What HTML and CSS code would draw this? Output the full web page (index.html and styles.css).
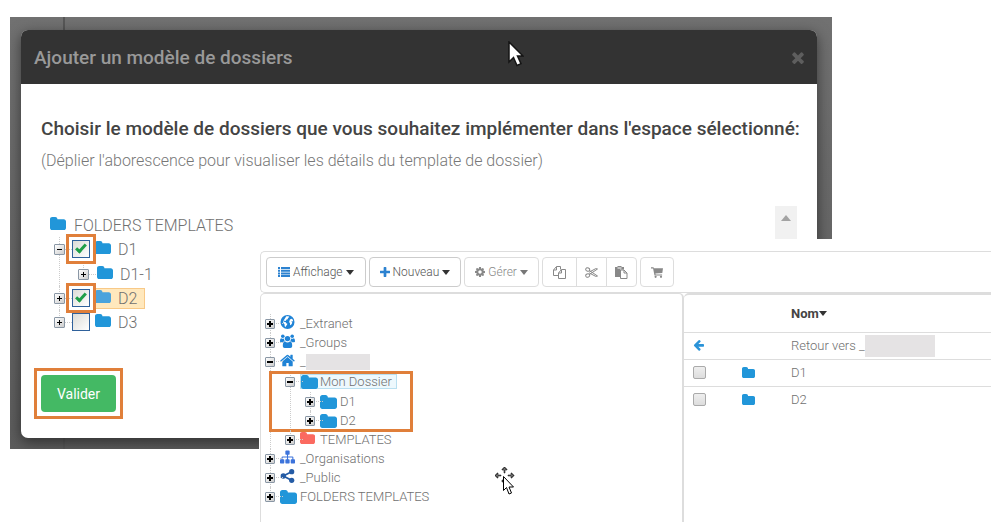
FILE: index.html
```html
<!DOCTYPE html>
<html lang="fr">
<head>
<meta charset="utf-8">
<title>Ajouter un modèle de dossiers</title>
<link rel="stylesheet" href="styles.css">
</head>
<body>
<svg class="sprite" aria-hidden="true">
  <symbol id="folder" viewBox="64 128 1664 1408" preserveAspectRatio="none"><path d="M1728 608v704q0 92-66 158t-158 66h-1216q-92 0-158-66t-66-158v-960q0-92 66-158t158-66h320q92 0 158 66t66 158v32h672q92 0 158 66t66 158z"/></symbol>
  <symbol id="times" viewBox="302 238 1188 1316"><path d="M1490 1322q0 40-28 68l-136 136q-28 28-68 28t-68-28l-294-294-294 294q-28 28-68 28t-68-28l-136-136q-28-28-28-68t28-68l294-294-294-294q-28-28-28-68t28-68l136-136q28-28 68-28t68 28l294 294 294-294q28-28 68-28t68 28l136 136q28 28 28 68t-28 68l-294 294 294 294q28 28 28 68z"/></symbol>
  <symbol id="home" viewBox="64 128 1664 1408"><path d="M1472 992v480q0 26-19 45t-45 19h-384v-384h-256v384h-384q-26 0-45-19t-19-45v-480q0-1 .5-3t.5-3l575-474 575 474q1 2 1 6zm223-69l-62 74q-8 9-21 11h-3q-13 0-21-7l-692-577-692 577q-12 8-24 7-13-2-21-11l-62-74q-8-10-7-23.500t11-21.500l719-599q32-26 76-26t76 26l244 204v-195q0-14 9-23t23-9h192q14 0 23 9t9 23v408l219 182q10 8 11 21.500t-7 23.500z"/></symbol>
  <symbol id="cog" viewBox="128 128 1536 1536"><path d="M1152 896q0-106-75-181t-181-75-181 75-75 181 75 181 181 75 181-75 75-181zm512-109v222q0 12-8 23t-20 13l-185 28q-19 54-39 91 35 50 107 138 10 12 10 25t-9 23q-27 37-99 108t-94 71q-12 0-26-9l-138-108q-44 23-91 38-16 136-29 186-7 28-36 28h-222q-14 0-24.500-8.500t-11.500-21.500l-28-184q-49-16-90-37l-141 107q-10 9-25 9-14 0-25-11-126-114-165-168-7-10-7-23 0-12 8-23 15-21 51-66.500t54-70.500q-27-50-41-99l-183-27q-13-2-21-12.500t-8-23.500v-222q0-12 8-23t19-13l186-28q14-46 39-92-40-57-107-138-10-12-10-24 0-10 9-23 26-36 98.500-107.500t94.500-71.500q13 0 26 10l138 107q44-23 91-38 16-136 29-186 7-28 36-28h222q14 0 24.500 8.500t11.500 21.500l28 184q49 16 90 37l142-107q9-9 24-9 13 0 25 10 129 119 165 170 7 8 7 22 0 12-8 23-15 21-51 66.500t-54 70.500q26 50 41 98l183 28q13 2 21 12.500t8 23.500z"/></symbol>
  <symbol id="plus" viewBox="192 128 1408 1408"><path d="M1600 736v192q0 40-28 68t-68 28h-416v416q0 40-28 68t-68 28h-192q-40 0-68-28t-28-68v-416h-416q-40 0-68-28t-28-68v-192q0-40 28-68t68-28h416v-416q0-40 28-68t68-28h192q40 0 68 28t28 68v416h416q40 0 68 28t28 68z"/></symbol>
  <symbol id="back" viewBox="64 256 1600 1450"><path d="M1664 896v128q0 53-32.500 90.500t-84.500 37.500h-704l293 294q38 36 38 90t-38 90l-75 76q-37 37-90 37-52 0-91-37l-651-652q-37-37-37-90 0-52 37-91l651-650q38-38 91-38 52 0 90 38l75 74q38 38 38 91t-38 91l-293 293h704q52 0 84.500 37.500t32.500 90.500z"/></symbol>
  <symbol id="sitemap" viewBox="0 128 1792 1536"><path d="M1792 1248v320q0 40-28 68t-68 28h-320q-40 0-68-28t-28-68v-320q0-40 28-68t68-28h96v-192h-512v192h96q40 0 68 28t28 68v320q0 40-28 68t-68 28h-320q-40 0-68-28t-28-68v-320q0-40 28-68t68-28h96v-192h-512v192h96q40 0 68 28t28 68v320q0 40-28 68t-68 28h-320q-40 0-68-28t-28-68v-320q0-40 28-68t68-28h96v-192q0-52 38-90t90-38h512v-192h-96q-40 0-68-28t-28-68v-320q0-40 28-68t68-28h320q40 0 68 28t28 68v320q0 40-28 68t-68 28h-96v192h512q52 0 90 38t38 90v192h96q40 0 68 28t28 68z"/></symbol>
  <symbol id="share" viewBox="0 0 14 14"><path d="M2.800 7 11 2.800M2.800 7 11 11.200" fill="none" stroke="currentColor" stroke-width="1.800"/><circle cx="2.800" cy="7" r="2.700"/><circle cx="11.200" cy="2.700" r="2.600"/><circle cx="11.200" cy="11.300" r="2.600"/></symbol>
  <symbol id="list" viewBox="0 0 12 10"><path d="M0 0h2v2H0zM3 0h9v2H3zM0 2.700h2v2H0zM3 2.700h9v2H3zM0 5.400h2v2H0zM3 5.400h9v2H3zM0 8h2v2H0zM3 8h9v2H3z"/></symbol>
  <symbol id="users" viewBox="0 0 15 14"><circle cx="2.800" cy="2.200" r="1.800"/><circle cx="12.200" cy="2.200" r="1.800"/><circle cx="7.500" cy="4.600" r="2.700"/><path d="M0 7.600C0 5 .6 4.300 1.300 4.300c.8.700 2 .6 2.600.3.100 1.200.4 1.900.9 2.600-.8 0-1.500.4-2 1.100H1c-.7 0-1-.3-1-.7zM15 7.600c0-2.600-.6-3.300-1.300-3.300-.8.700-2 .6-2.600.3-.1 1.200-.4 1.900-.9 2.600.8 0 1.500.4 2 1.100H14c.7 0 1-.3 1-.7zM2.800 11.800c0-2.900.8-4.200 2.400-4.200 1.400 1.200 3.200 1.200 4.600 0 1.600 0 2.400 1.300 2.400 4.200 0 1.400-.7 2.200-1.900 2.200H4.700c-1.200 0-1.900-.8-1.900-2.200z"/></symbol>
  <symbol id="globe" viewBox="0 0 14 14"><circle cx="7" cy="7" r="7"/><path fill="#fff" d="M5.800 1.300 8 1.200l.8.800-1.300.9-.3 1.300-1.200.3-.6 1.300-.9.300-1-.6-.3.900 1 .6 1.200.2.300 1 1.200.6-.6 1.500-.9.700-.2 1.200-1-1-.2-1.900-1.200-1.300-.2-1.300.7-1.500zM9.400 4.600l1.500-.8 1.300.6.500 1.900-.5.300-.8-.6-.4.400.8 1.300-.8 1.500-.9 1-.5-.3-.1-1.700-.9-1.100z"/></symbol>
  <symbol id="copy" viewBox="0 0 13 13"><g fill="none" stroke="currentColor"><path d="M5 9.500H.5V4l3-3.500h4v3M3.500.8V4H.7"/><path d="M5.500 12.500V7l3-3.500h4v9zM8.500 3.800V7H5.700"/></g></symbol>
  <symbol id="cut" viewBox="0 0 13 11"><g fill="none" stroke="currentColor"><ellipse cx="2.700" cy="2.500" rx="2" ry="1.700" transform="rotate(25 2.700 2.500)"/><ellipse cx="2.700" cy="8.500" rx="2" ry="1.700" transform="rotate(-25 2.700 8.500)"/><path d="M4.300 3.500 12.500 9l-1.700.4L4.300 6M4.300 7.500 12.500 2l-1.700-.4L4.300 5"/></g></symbol>
  <symbol id="paste" viewBox="0 0 13 13"><path d="M0 1h2.500V0h4v1H9v2.500H5V11H0z"/><path d="M2.500 2h4" stroke="#fff"/><path d="M5.500 4h3.500l3 3v5.500H5.500zM9 4v3h3" fill="#fff" stroke="currentColor"/></symbol>
  <symbol id="cart" viewBox="0 0 12 11"><path d="M0 .3h2.500l.4 1H12l-.7 4.600-6.900.7.200.8h6.500v1.200H3.500L2.100 1.500H0z"/><circle cx="4.600" cy="9.800" r="1.100"/><circle cx="10" cy="9.800" r="1.100"/></symbol>
</svg>

<main class="scene">
  <section class="backdrop">
    <div class="modal" role="dialog" aria-labelledby="modal-title">
      <header class="modal-header">
        <h1 id="modal-title">Ajouter un modèle de dossiers</h1>
        <button class="close" type="button" aria-label="Fermer"><svg><use href="#times"/></svg></button>
      </header>
      <div class="modal-body">
        <h2>Choisir le modèle de dossiers que vous souhaitez implémenter dans l'espace sélectionné:</h2>
        <p class="hint">(Déplier l'aborescence pour visualiser les détails du template de dossier)</p>
        <div class="tree-area">
          <div class="template-tree">
            <div class="row root"><svg class="folder"><use href="#folder"/></svg><span>FOLDERS TEMPLATES</span></div>
            <ul class="tree">
              <li>
                <div class="row"><button class="toggle open" type="button" aria-label="Replier D1"></button><span class="marked"><input class="pick" type="checkbox" id="t1" checked></span><label for="t1"><svg class="folder"><use href="#folder"/></svg>D1</label></div>
                <ul>
                  <li><div class="row"><button class="toggle" type="button" aria-label="Déplier D1-1"></button><span class="item"><svg class="folder"><use href="#folder"/></svg>D1-1</span></div></li>
                </ul>
              </li>
              <li><div class="row"><button class="toggle" type="button" aria-label="Déplier D2"></button><span class="marked"><input class="pick" type="checkbox" id="t2" checked></span><label class="selected" for="t2"><svg class="folder"><use href="#folder"/></svg>D2</label></div></li>
              <li><div class="row"><button class="toggle" type="button" aria-label="Déplier D3"></button><input class="pick plain" type="checkbox" id="t3"><label for="t3"><svg class="folder"><use href="#folder"/></svg>D3</label></div></li>
            </ul>
          </div>
          <div class="scroll-track"><span class="scroll-up"></span></div>
        </div>
        <div class="submit-frame"><button class="submit" type="button">Valider</button></div>
      </div>
    </div>
    <svg class="pointer" viewBox="0 0 16 26"><path d="M1 1v20l4.500-4.500 3.500 8 4-1.800-3.500-7.700H15z" fill="#fff" stroke="#151515" stroke-width="1.500"/></svg>
  </section>

  <section class="explorer">
    <div class="toolbar">
      <button class="tool" type="button"><svg class="blue list"><use href="#list"/></svg>Affichage<i class="caret"></i></button>
      <button class="tool tight" type="button"><svg class="blue plus"><use href="#plus"/></svg>Nouveau<i class="caret"></i></button>
      <button class="tool tight muted" type="button"><svg class="cog"><use href="#cog"/></svg>Gérer<i class="caret"></i></button>
      <div class="group">
        <button class="tool muted" type="button" aria-label="Copier"><svg class="glyph"><use href="#copy"/></svg></button>
        <button class="tool muted" type="button" aria-label="Couper"><svg class="glyph"><use href="#cut"/></svg></button>
        <button class="tool muted" type="button" aria-label="Coller"><svg class="glyph"><use href="#paste"/></svg></button>
      </div>
      <button class="tool muted" type="button" aria-label="Panier"><svg class="cart"><use href="#cart"/></svg></button>
    </div>
    <div class="panes">
      <nav class="side">
        <ul class="tree small">
          <li><div class="row"><button class="toggle" type="button" aria-label="Déplier _Extranet"></button><svg class="icon"><use href="#globe"/></svg><span>_Extranet</span></div></li>
          <li><div class="row"><button class="toggle" type="button" aria-label="Déplier _Groups"></button><svg class="icon"><use href="#users"/></svg><span>_Groups</span></div></li>
          <li>
            <div class="row"><button class="toggle open" type="button" aria-label="Replier"></button><svg class="icon"><use href="#home"/></svg><span>_</span><span class="mask"></span></div>
            <ul>
              <li class="framed">
                <div class="row"><button class="toggle open" type="button" aria-label="Replier Mon Dossier"></button><span class="current"><svg class="wide"><use href="#folder"/></svg>Mon Dossier</span></div>
                <ul>
                  <li><div class="row"><button class="toggle" type="button" aria-label="Déplier D1"></button><svg class="wide"><use href="#folder"/></svg><span>D1</span></div></li>
                  <li><div class="row"><button class="toggle" type="button" aria-label="Déplier D2"></button><svg class="wide"><use href="#folder"/></svg><span>D2</span></div></li>
                </ul>
              </li>
              <li><div class="row"><button class="toggle" type="button" aria-label="Déplier TEMPLATES"></button><svg class="icon red"><use href="#folder"/></svg><span>TEMPLATES</span></div></li>
            </ul>
          </li>
          <li><div class="row"><button class="toggle" type="button" aria-label="Déplier _Organisations"></button><svg class="icon indigo"><use href="#sitemap"/></svg><span>_Organisations</span></div></li>
          <li><div class="row"><button class="toggle" type="button" aria-label="Déplier _Public"></button><svg class="icon navy"><use href="#share"/></svg><span>_Public</span></div></li>
          <li><div class="row"><button class="toggle" type="button" aria-label="Déplier FOLDERS TEMPLATES"></button><svg class="wide"><use href="#folder"/></svg><span>FOLDERS TEMPLATES</span></div></li>
        </ul>
      </nav>
      <div class="content">
        <table>
          <thead><tr><th class="c-pick"></th><th class="c-icon"></th><th>Nom<i class="caret"></i></th></tr></thead>
          <tbody>
            <tr><td class="c-pick"><svg class="back"><use href="#back"/></svg></td><td></td><td><span class="return">Retour vers _<span class="mask"></span></span></td></tr>
            <tr><td class="c-pick"><input class="box" type="checkbox" id="r1"></td><td><svg class="file"><use href="#folder"/></svg></td><td><label for="r1">D1</label></td></tr>
            <tr><td class="c-pick"><input class="box" type="checkbox" id="r2"></td><td><svg class="file"><use href="#folder"/></svg></td><td><label for="r2">D2</label></td></tr>
          </tbody>
        </table>
      </div>
    </div>
    <svg class="mover" viewBox="0 0 20 28"><path d="M9 0h1v1h1v1h1v1h-2v3H9V3H7V2h1V1h1zM0 8h1V7h1V6h1v2h3v1H3v2H2v-1H1V9H0zM19 8h-1V7h-1V6h-1v2h-3v1h3v2h1v-1h1V9h1zM7 13h1v2H7z" stroke="#000" stroke-width=".5"/><path d="M8.500 9.500v14l3-3 2.500 6.500 2.500-1-2.500-6h4.500z" fill="#fff" stroke="#000"/></svg>
  </section>
</main>
</body>
</html>
```

FILE: styles.css
```css
*, *::before, *::after { box-sizing: border-box; }
body { margin: 0; background: #fff; color: #707070; font-family: Roboto, "Liberation Sans", sans-serif; font-weight: 300; }
button, input { font: inherit; margin: 0; padding: 0; }
svg { display: block; flex: none; fill: currentColor; }
ul { list-style: none; margin: 0; padding: 0; }
.sprite { position: absolute; width: 0; height: 0; }
.scene { position: relative; min-height: 100vh; padding: 17px 159px 0 10px; overflow: hidden; }

/* Dialog */
.backdrop { position: relative; padding: 13px 15px 11px 11px; background: linear-gradient(90deg, transparent 53px, #575757 53px, #575757 55px, transparent 55px), linear-gradient(#717171, #5c5c5c); overflow: hidden; }
.modal { border-radius: 7px; background: #fff; box-shadow: 0 4px 14px rgba(0, 0, 0, .5); overflow: hidden; }
.modal-header { display: flex; align-items: center; justify-content: space-between; height: 54px; padding: 0 13px; background: #333; }
h1 { margin: 0; color: #999; font-size: 19px; font-weight: 500; }
h2 { margin: 0; color: #444; font-size: 19px; font-weight: 500; line-height: 30px; white-space: nowrap; }
.close { border: 0; background: none; color: #5e5e5e; }
.close svg { width: 12px; height: 13px; }
.modal-body { padding: 30px 20px 19px; }
.hint { margin: 5px 0 0; color: #777; font-size: 16px; line-height: 24px; }
.tree-area { display: flex; justify-content: space-between; min-height: 160px; margin-top: 33px; }
.template-tree { padding: 7px 0 0 9px; font-size: 16px; }
.template-tree .row { height: 24px; }
.scroll-track { width: 22px; padding-top: 9px; background: #f1f1f1; }
.scroll-up { display: block; width: 0; margin: 0 auto; border: 5px solid transparent; border-top: 0; border-bottom: 6px solid #a3a3a3; }
.submit-frame { width: 89px; margin: 2px 0 0 -7px; padding: 4px; border: 3px solid #e07f3a; }
.submit { display: block; width: 75px; height: 37px; border: 0; border-radius: 4px; background: #44b964; color: #fff; font-size: 14px; font-weight: 400; }

/* Trees */
.row { display: flex; align-items: center; position: relative; white-space: nowrap; }
.tree { padding-left: 4px; }
.tree ul { padding: 1px 0 0 24px; }
.tree li { position: relative; }
.tree li::before { content: ""; position: absolute; top: 0; bottom: 0; left: 5px; border-left: 1px dotted #ccc; }
.tree li:last-child::before { bottom: auto; height: 12px; }
.tree .row::before { content: ""; position: absolute; left: 11px; width: 7px; border-top: 1px dotted #ccc; }
.root.row::before { display: none; }
.toggle { position: relative; flex: none; width: 11px; height: 11px; border: 1px solid #8a97a5; border-radius: 1px; background: linear-gradient(135deg, #fff, #ccc); }
.toggle::before { content: ""; position: absolute; top: 4px; left: 2px; width: 5px; height: 1px; background: #000; }
.toggle::after { content: ""; position: absolute; top: 2px; left: 4px; width: 1px; height: 5px; background: #000; }
.toggle.open::after { display: none; }
.folder { width: 16px; height: 13px; margin-bottom: 4px; color: #2196d9; }
.root { gap: 8px; }
.item, label { display: flex; align-items: center; gap: 7px; }
.item { margin-left: 8px; }
.row label { height: 21px; padding-right: 7px; border: 1px solid transparent; border-left: 0; }
.row label.selected { border-color: #f8c987; background: #ffe8bd; }
.selected .folder { color: #4aa3dc; }
.pick { appearance: none; display: block; position: relative; flex: none; width: 18px; height: 18px; border: 1px solid #2f619b; background: linear-gradient(135deg, #dcdcd7, #fff); }
.pick.plain { margin: 0 5px 0 7px; }
.pick:checked::after { content: ""; position: absolute; top: 1px; left: 5px; width: 6px; height: 11px; border: solid #1f9f48; border-width: 0 3px 3px 0; transform: rotate(42deg); }
.marked { margin: 0 -1px 0 1px; padding: 3px; border: 3px solid #e07f3a; z-index: 1; }

/* Explorer */
.explorer { position: absolute; top: 239px; right: 0; bottom: 0; left: 259px; display: flex; flex-direction: column; padding: 12px 0 0 1px; background: #fff; }
.toolbar { display: flex; gap: 3px; padding: 5px; border: 1px solid #ddd; border-right: 0; border-radius: 5px 0 0 5px; }
.tool { display: flex; align-items: center; height: 30px; padding: 0 11px; border: 1px solid #ccc; border-radius: 4px; background: #fff; color: #555; font-size: 12px; }
.tool.tight { padding: 0 10px; }
.tool.muted { border-color: #ddd; color: #888; }
.tool svg { margin-right: 3px; }
.tool .blue { color: #2c82d0; }
.list { width: 12px; height: 10px; }
.plus, .cog { width: 10px; height: 10px; }
.caret { display: inline-block; width: 0; margin-left: 3px; border: 4px solid transparent; border-bottom: 0; border-top: 5px solid #333; }
.muted .caret { border-top-color: #777; }
.group { display: flex; }
.group .tool { border-radius: 0; margin-left: -1px; padding: 0 8px; }
.group .tool:first-child { margin-left: 0; border-radius: 4px 0 0 4px; padding: 0 10px; }
.group .tool:last-child { border-radius: 0 4px 4px 0; }
.tool .glyph { width: 13px; height: 13px; margin: 0; }
.tool .cart { width: 12px; height: 11px; margin: 0; }
.toolbar > .tool:last-child { padding: 0 10px; }
.panes { display: flex; flex: 1; }
.side { width: 58%; border: 1px solid #ddd; border-width: 1px 2px 0 1px; border-radius: 5px 5px 0 0; padding: 20px 0 0; }
.small { font-size: 13px; }
.small ul { padding-left: 20px; }
.small .row { height: 19px; }
.small .toggle { width: 10px; height: 10px; }
.small .toggle::before { top: 3px; left: 1px; width: 6px; height: 2px; }
.small .toggle::after { top: 1px; left: 3px; width: 2px; height: 6px; }
.icon { width: 15px; height: 14px; margin: 0 5px 3px 5px; color: #1f83d6; }
.small .wide { width: 17px; height: 14px; margin: 0 3px 0 5px; color: #2196d9; }
.icon.red { height: 12px; color: #fb6a60; }
.icon.indigo { color: #3c73db; }
.icon.navy { color: #245ba5; }
.current { display: flex; align-items: center; height: 15px; margin-left: 5px; padding-right: 4px; border: 1px solid #b9dff0; background: #edf8fd; }
.small .current .wide { margin: 0 2px 0 0; }
.mask { display: inline-block; width: 64px; height: 16px; background: #e5e3e4; }
.framed::after { content: ""; position: absolute; top: -1px; bottom: -2px; left: -16px; width: 144px; border: 3px solid #e07f3a; pointer-events: none; }
.content { flex: 1; border-top: 2px solid #ddd; border-radius: 5px 0 0 0; }
table { width: 100%; border-collapse: collapse; table-layout: fixed; font-size: 13px; }
th { height: 37px; padding: 0; color: #444; font-weight: 700; text-align: left; }
td { height: 27px; padding: 0; border-top: 1px solid #ddd; }
th .caret { margin: 0 0 2px; }
.c-pick { width: 58px; padding-left: 9px; }
.c-icon { width: 49px; }
.box { display: block; appearance: none; width: 13px; height: 13px; border: 1px solid #aaa; border-radius: 2px; background: linear-gradient(#eee, #ddd); }
.back { width: 11px; height: 11px; color: #2a93d8; }
.file { width: 13px; height: 11px; color: #2196d9; }
.return { display: flex; align-items: center; }
.return .mask { width: 70px; height: 22px; }

/* Pointers */
.pointer { position: absolute; top: 24px; left: 498px; width: 16px; height: 26px; }
.mover { position: absolute; top: 228px; left: 236px; width: 20px; height: 28px; }
```
